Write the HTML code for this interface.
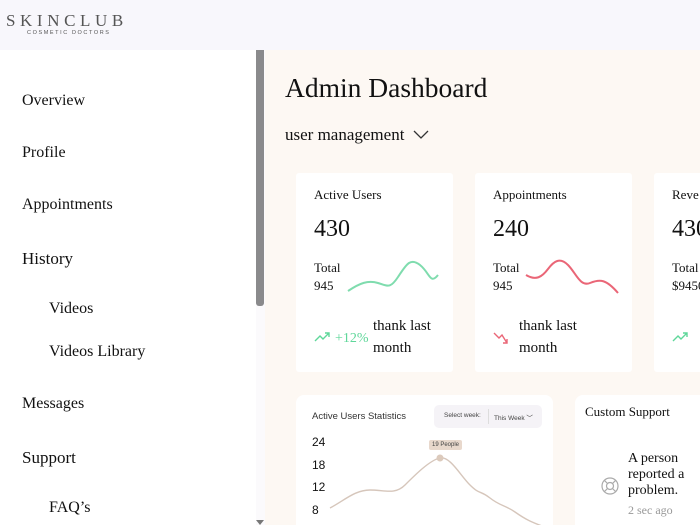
<!DOCTYPE html>
<html><head><style>
*{margin:0;padding:0;box-sizing:border-box}
html,body{width:700px;height:525px;overflow:hidden}
body{background:#fdf8f3;font-family:"Liberation Serif",serif;color:#111;position:relative}
.hdr{position:absolute;left:0;top:0;width:700px;height:50px;background:#f8f7fc}
.logo{position:absolute;left:6px;top:11px;font-size:17px;letter-spacing:4.6px;color:#555}
.logo2{position:absolute;left:27px;top:30px;font-family:"Liberation Sans",sans-serif;font-size:5.5px;letter-spacing:1.6px;color:#555}
.side{position:absolute;left:0;top:50px;width:265px;height:475px;background:#fff}
.track{position:absolute;left:256px;top:50px;width:9px;height:475px;background:#fbfafc}
.thumb{position:absolute;left:256px;top:50px;width:8px;height:256px;background:#8a8a8c;border-radius:0 0 3px 3px}
.arr{position:absolute;left:256px;top:520px;width:0;height:0;border-left:4px solid transparent;border-right:4px solid transparent;border-top:5px solid #777}
.nav{position:absolute;font-size:16px;color:#111}
h1{position:absolute;left:285px;top:72px;font-weight:normal;font-size:27.5px}
.um{position:absolute;left:285px;top:125px;font-size:17px}
.card{position:absolute;background:#fff;border-radius:3px}
.ct{position:absolute;font-size:13px}
.big{position:absolute;font-size:24px}
.sm{position:absolute;font-size:13px;line-height:18px}
.tl{position:absolute;font-size:15px;line-height:22px}
.sans{font-family:"Liberation Sans",sans-serif}
</style></head><body>
<div class="hdr"></div>
<div class="logo">SKINCLUB</div>
<div class="logo2">COSMETIC DOCTORS</div>
<div class="side"></div>
<div class="track"></div><div class="thumb"></div><div class="arr"></div>
<div class="nav" style="left:22px;top:92px">Overview</div>
<div class="nav" style="left:22px;top:144px">Profile</div>
<div class="nav" style="left:22px;top:196px">Appointments</div>
<div class="nav" style="left:22px;top:249px;font-size:17px">History</div>
<div class="nav" style="left:49px;top:300px">Videos</div>
<div class="nav" style="left:49px;top:343px">Videos Library</div>
<div class="nav" style="left:22px;top:395px">Messages</div>
<div class="nav" style="left:22px;top:448px;font-size:17px">Support</div>
<div class="nav" style="left:49px;top:499px">FAQ’s</div>

<h1>Admin Dashboard</h1>
<div class="um">user management <svg width="16" height="10" style="margin-left:4px" viewBox="0 0 16 10"><path d="M1 1l7 7 7-7" fill="none" stroke="#333" stroke-width="1.3"/></svg></div>

<div class="card" style="left:296px;top:173px;width:157px;height:199px"></div>
<div class="card" style="left:475px;top:173px;width:157px;height:199px"></div>
<div class="card" style="left:654px;top:173px;width:60px;height:199px"></div>

<div class="ct" style="left:314px;top:187px">Active Users</div>
<div class="big" style="left:314px;top:216px">430</div>
<div class="sm" style="left:314px;top:259px">Total<br>945</div>
<svg style="position:absolute;left:340px;top:255px" width="100" height="45"><path d="M8 36C20 28 28 25 38 28S50 34 58 22 70 2 80 10 90 30 98 20" fill="none" stroke="#7fdcae" stroke-width="2"/></svg>
<svg style="position:absolute;left:314px;top:330px" width="20" height="14"><path d="M1 11l5-5 3 3 6-6M11 3h4v4" fill="none" stroke="#5fd79a" stroke-width="1.4"/></svg>
<div class="sm" style="left:335px;top:330px;color:#5fd79a;font-size:14px">+12%</div>
<div class="tl" style="left:373px;top:315px">thank last<br>month</div>

<div class="ct" style="left:493px;top:187px">Appointments</div>
<div class="big" style="left:493px;top:216px">240</div>
<div class="sm" style="left:493px;top:259px">Total<br>945</div>
<svg style="position:absolute;left:510px;top:255px" width="110" height="45"><path d="M16 20C26 26 32 22 38 14S50 2 58 10 70 32 80 28 96 24 108 38" fill="none" stroke="#ea6677" stroke-width="2"/></svg>
<svg style="position:absolute;left:493px;top:330px" width="20" height="16"><path d="M1 3l5 5 3-3 5 8M10 13h4v-4" fill="none" stroke="#ea6677" stroke-width="1.4"/></svg>
<div class="tl" style="left:519px;top:315px">thank last<br>month</div>

<div class="ct" style="left:672px;top:187px">Reve</div>
<div class="big" style="left:672px;top:216px">430</div>
<div class="sm" style="left:672px;top:259px">Total<br>$9450</div>
<svg style="position:absolute;left:672px;top:330px" width="28" height="14"><path d="M1 11l5-5 3 3 6-6M11 3h4v4" fill="none" stroke="#5fd79a" stroke-width="1.4"/></svg>

<div class="card" style="left:296px;top:395px;width:257px;height:140px;border-radius:8px"></div>
<div class="sans" style="position:absolute;left:312px;top:411px;font-size:9.5px;color:#333">Active Users Statistics</div>
<div style="position:absolute;left:434px;top:405px;width:108px;height:23px;background:#f5f3f7;border-radius:5px"></div>
<div class="sans" style="position:absolute;left:444px;top:412px;font-size:6.5px;color:#444">Select week:</div>
<div style="position:absolute;left:488px;top:409px;width:1px;height:15px;background:#ddd"></div>
<div class="sans" style="position:absolute;left:494px;top:412px;font-size:6.5px;color:#444">This Week ﹀</div>
<div class="sans" style="position:absolute;left:312px;top:431px;font-size:12px;line-height:22.5px">24<br>18<br>12<br>8</div>
<div class="sans" style="position:absolute;left:429px;top:440px;font-size:6px;background:#e8d8cc;padding:2px 3px;border-radius:2px;color:#444">19 People</div>
<svg style="position:absolute;left:300px;top:440px" width="253" height="85"><path d="M30 68C45 60 55 50 70 50S95 55 105 45 130 20 140 18 160 35 170 45 180 50 190 58 205 65 215 72 230 82 253 90" fill="none" stroke="#d6c6bb" stroke-width="1.4"/><circle cx="140" cy="18" r="3.5" fill="#dccabc"/></svg>

<div class="card" style="left:575px;top:395px;width:140px;height:140px;border-radius:8px"></div>
<div class="ct" style="left:585px;top:404px">Custom Support</div>
<svg style="position:absolute;left:600px;top:476px" width="20" height="20" viewBox="0 0 20 20"><g fill="none" stroke="#aaa" stroke-width="1.2"><circle cx="10" cy="10" r="8"/><circle cx="10" cy="10" r="3.5"/><path d="M4.3 4.3l3.2 3.2M15.7 4.3l-3.2 3.2M4.3 15.7l3.2-3.2M15.7 15.7l-3.2-3.2"/></g></svg>
<div style="position:absolute;left:628px;top:451px;font-size:14px;line-height:16px">A person<br>reported a<br>problem.</div>
<div style="position:absolute;left:628px;top:503px;font-size:12px;color:#999">2 sec ago</div>
</body></html>
